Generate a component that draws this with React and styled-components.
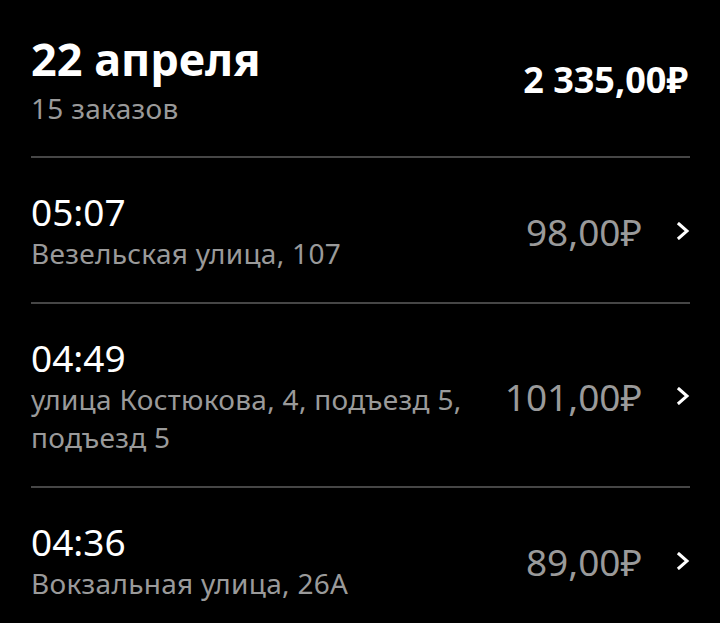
import React from 'react';
import styled, { createGlobalStyle } from 'styled-components';

const GlobalStyle = createGlobalStyle`
  html, body {
    margin: 0;
    padding: 0;
    background: #000000;
  }
  body {
    font-family: 'Noto Sans', 'DejaVu Sans', sans-serif;
    color: #ffffff;
  }
`;

const Screen = styled.div`
  background: #000000;
  min-height: 623px;
  padding: 0 30px 0 31px;
`;

const DayHeader = styled.header`
  display: flex;
  justify-content: space-between;
  align-items: center;
  padding: 33px 0 31px 0;
  border-bottom: 2px solid #464646;
`;

const DayTitle = styled.h1`
  margin: 0;
  font-size: 45px;
  line-height: 52px;
  font-weight: 700;
`;

const DayCount = styled.div`
  margin-top: 6px;
  font-size: 28px;
  line-height: 34px;
  letter-spacing: 0.3px;
  color: #9a9a9a;
`;

const DayTotal = styled.div`
  font-size: 36px;
  font-weight: 700;
  margin-right: 2px;
`;

const OrderRow = styled.div`
  display: flex;
  align-items: center;
  gap: 34px;
  padding: 32px 0 30px 0;
  border-bottom: ${(p) => (p.$last ? 'none' : '2px solid #464646')};
`;

const OrderInfo = styled.div`
  flex: 1;
  min-width: 0;
`;

const OrderTime = styled.div`
  font-size: 37px;
  line-height: 44px;
`;

const OrderAddress = styled.div`
  font-size: 28px;
  line-height: 38px;
  letter-spacing: 0.3px;
  color: #9a9a9a;
`;

const OrderPrice = styled.div`
  display: flex;
  align-items: center;
  gap: 34px;
  font-size: 37px;
  color: #9a9a9a;
  white-space: nowrap;
`;

const Chevron = () => (
  <svg width="14" height="18" viewBox="0 0 14 18">
    <path d="M3 2 L11 9 L3 16" fill="none" stroke="#ffffff" strokeWidth="3" strokeLinecap="square" />
  </svg>
);

const orders = [
  { time: '05:07', address: 'Везельская улица, 107', price: '98,00₽' },
  { time: '04:49', address: 'улица Костюкова, 4, подъезд 5, подъезд 5', price: '101,00₽' },
  { time: '04:36', address: 'Вокзальная улица, 26А', price: '89,00₽' },
];

export default function App() {
  return (
    <Screen>
      <GlobalStyle />
      <DayHeader>
        <div>
          <DayTitle>22 апреля</DayTitle>
          <DayCount>15 заказов</DayCount>
        </div>
        <DayTotal>2 335,00₽</DayTotal>
      </DayHeader>
      {orders.map((o, i) => (
        <OrderRow key={o.time} $last={i === orders.length - 1}>
          <OrderInfo>
            <OrderTime>{o.time}</OrderTime>
            <OrderAddress>{o.address}</OrderAddress>
          </OrderInfo>
          <OrderPrice>
            {o.price}
            <Chevron />
          </OrderPrice>
        </OrderRow>
      ))}
    </Screen>
  );
}
